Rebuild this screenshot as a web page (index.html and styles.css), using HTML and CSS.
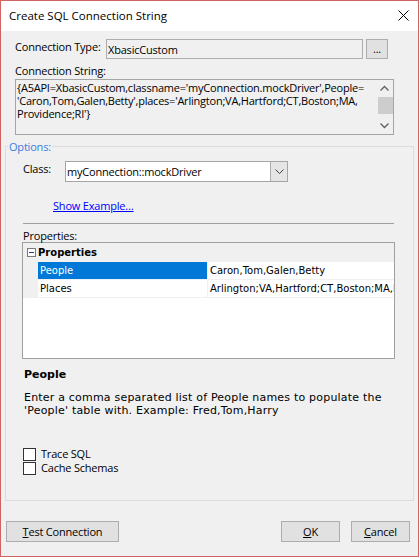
FILE: index.html
```html
<!DOCTYPE html>
<html>
<head>
<meta charset="utf-8">
<title>Create SQL Connection String</title>
<link rel="stylesheet" href="styles.css">
</head>
<body>
<div class="window">
  <div class="titlebar">
    <span class="title">Create SQL Connection String</span>
    <svg class="close" width="11" height="11" viewBox="0 0 11 11"><path d="M0.5 0.5 L10.5 10.5 M10.5 0.5 L0.5 10.5" stroke="#000" stroke-width="1" fill="none"/></svg>
  </div>
  <div class="content">
    <div class="top">
      <div class="type-row">
        <span class="type-label">Connection Type:</span>
        <div class="type-input">XbasicCustom</div>
        <div class="dots-btn">...</div>
      </div>
      <div class="cs-label">Connection String:</div>
      <div class="textarea">
        <div class="ta-text">{A5API=XbasicCustom,classname='myConnection.mockDriver',People=<br>'Caron,Tom,Galen,Betty',places='Arlington;VA,Hartford;CT,Boston;MA,<br>Providence;RI'}</div>
        <div class="vscroll">
          <svg class="arrow" width="15" height="17" viewBox="0 0 15 17"><path d="M3.5 10.5 L7.5 6.5 L11.5 10.5" stroke="#606060" stroke-width="1.3" fill="none"/></svg>
          <div class="thumb"></div>
          <div class="track"></div>
          <svg class="arrow" width="15" height="17" viewBox="0 0 15 17"><path d="M3.5 6.5 L7.5 10.5 L11.5 6.5" stroke="#606060" stroke-width="1.3" fill="none"/></svg>
        </div>
      </div>
    </div>

    <fieldset class="options">
      <legend class="legend">Options:</legend>
      <div class="options-body">
        <div class="class-row">
          <span class="class-label">Class:</span>
          <div class="combo">
            <span class="combo-text">myConnection::mockDriver</span>
            <div class="combo-btn"><svg width="9" height="6" viewBox="0 0 9 6"><path d="M0.5 0.5 L4.5 4.5 L8.5 0.5" stroke="#404040" stroke-width="1" fill="none"/></svg></div>
          </div>
        </div>
        <a class="example-link" href="#">Show Example…</a>
        <div class="separator"></div>
        <div class="props-label">Properties:</div>
        <div class="grid">
          <div class="cat-row">
            <span class="minus"><svg width="9" height="9" viewBox="0 0 9 9"><rect x="0.5" y="0.5" width="8" height="8" fill="#fff" stroke="#7a7a7a"/><path d="M2 4.5 H7" stroke="#1f3a8a" stroke-width="1"/></svg></span>
            <span class="cat-name">Properties</span>
          </div>
          <div class="prop-row">
            <span class="margin"></span>
            <span class="pname selected">People</span>
            <span class="pvalue">Caron,Tom,Galen,Betty</span>
          </div>
          <div class="prop-row">
            <span class="margin"></span>
            <span class="pname">Places</span>
            <span class="pvalue">Arlington;VA,Hartford;CT,Boston;MA,Providence;RI</span>
          </div>
        </div>
        <div class="desc-title">People</div>
        <div class="desc-text">Enter a comma separated list of People names to populate the<br>'People' table with. Example: Fred,Tom,Harry</div>
        <div class="checks">
          <label class="check"><span class="box"></span><span>Trace SQL</span></label>
          <label class="check"><span class="box"></span><span>Cache Schemas</span></label>
        </div>
      </div>
    </fieldset>

    <div class="buttons">
      <div class="btn btn-test"><u>T</u>est Connection</div>
      <div class="spacer"></div>
      <div class="btn btn-ok"><u>O</u>K</div>
      <div class="btn btn-cancel"><u>C</u>ancel</div>
    </div>
  </div>
</div>
</body>
</html>
```

FILE: styles.css
```css
* { box-sizing: border-box; }
html, body { margin: 0; padding: 0; }
body {
  font-family: "Open Sans", "Liberation Sans", sans-serif;
  font-size: 11px;
  letter-spacing: -0.2px;
  color: #000;
  background: #f0f0f0;
}
.window {
  width: 419px;
  height: 557px;
  border: 1px solid #d16262;
  background: #f0f0f0;
  display: flex;
  flex-direction: column;
}
.titlebar {
  height: 30px;
  background: #fff;
  display: flex;
  align-items: center;
  padding-left: 8px;
  padding-right: 9px;
}
.title { flex: 1; font-size: 11.5px; letter-spacing: 0; line-height: 30px; }
.close { display: block; margin-top: -1px; }

.content { padding: 0 4px; flex: 1; display: flex; flex-direction: column; }

.top { padding: 8px 20px 0 10px; }
.type-row { display: flex; align-items: flex-start; }
.type-label { width: 91px; line-height: 15px; white-space: nowrap; }
.type-input {
  width: 257px; height: 20px;
  border: 1px solid #adadad;
  background: #f0f0f0;
  line-height: 18px;
  padding-left: 1px;
  padding-top: 1px;
}
.dots-btn {
  width: 22px; height: 20px;
  margin-left: 3px;
  border: 1px solid #adadad;
  background: #e1e1e1;
  text-align: center;
  line-height: 18px;
  font-size: 11px;
}
.cs-label { margin-top: 4px; line-height: 15px; margin-bottom: 1px; }
.textarea {
  height: 56px;
  border: 1px solid #a5a5a5;
  background: #f0f0f0;
  display: flex;
}
.ta-text { flex: 1; padding: 1px 0 0 1px; line-height: 13px; white-space: nowrap; overflow: hidden; letter-spacing: -0.22px; }
.vscroll { width: 16px; display: flex; flex-direction: column; background: #f0f0f0; }
.arrow { display: block; flex: none; }
.thumb { height: 17px; background: #cdcdcd; margin: 0 0 0 1px; flex: none; }
.track { flex: 1; }

.options {
  margin: 4px 0 0 0;
  padding: 0;
  border: 1px solid #dcdcdc;
  min-width: 0;
}
.legend {
  color: #3b7de0;
  padding: 0 1px;
  margin-left: 2px;
  line-height: 15px;
}
.options-body { padding: 0 18px 25px 17px; }
.class-row { display: flex; align-items: flex-start; margin-top: 7px; }
.class-label { width: 42px; line-height: 15px; }
.combo {
  width: 223px; height: 21px;
  border: 1px solid #a5a5a5;
  background: #fff;
  display: flex;
}
.combo-text { flex: 1; line-height: 19px; padding-left: 1px; }
.combo-btn {
  width: 17px;
  background: #e5e5e5;
  border-left: 1px solid #adadad;
  display: flex; align-items: center; justify-content: center;
}
.combo-btn svg { display: block; }
.example-link {
  display: block;
  width: max-content;
  margin: 16px 0 0 30px;
  color: #0000ff;
  text-decoration: underline;
  line-height: 15px;
}
.separator { margin-top: 10px; height: 1px; width: 371px; background: #a0a0a0; }
.props-label { margin-top: 5px; line-height: 13px; }
.grid {
  margin-left: -1px;
  width: 373px;
  height: 117px;
  border: 1px solid #a0a0a0;
  background: #fff;
  font-family: "DejaVu Sans", Verdana, sans-serif;
  font-size: 10px;
  letter-spacing: 0;
}
.cat-row { height: 19px; background: #f0f0f0; display: flex; align-items: center; }
.minus { width: 15px; display: flex; justify-content: center; padding-left: 1px; }
.minus svg { display: block; }
.cat-name { font-weight: bold; font-size: 10px; }
.prop-row { height: 18px; display: flex; border-bottom: 1px solid #f0f0f0; }
.margin { width: 15px; background: #f0f0f0; flex: none; }
.pname { width: 170px; flex: none; line-height: 17px; padding-left: 2px; border-right: 1px solid #f0f0f0; }
.pname.selected { background: #0078d7; color: #fff; }
.pvalue { flex: 1; line-height: 17px; padding-left: 2px; white-space: nowrap; overflow: hidden; }
.desc-title {
  margin-top: 8px; padding-left: 1px;
  font-family: "DejaVu Sans", Verdana, sans-serif;
  font-weight: bold; font-size: 11px; line-height: 15px;
  letter-spacing: 0;
}
.desc-text {
  margin-top: 9px; padding-left: 1px;
  font-family: "DejaVu Sans", Verdana, sans-serif;
  font-size: 11px; letter-spacing: 0.2px; line-height: 13px;
  white-space: nowrap;
}
.checks { margin-top: 30px; }
.check { display: flex; align-items: flex-start; height: 14px; }
.box { width: 13px; height: 13px; margin-top: 1px; border: 1px solid #333; background: #fff; margin-right: 5px; flex: none; }
.check span:last-child { line-height: 14px; }

.buttons { display: flex; margin-top: 20px; padding-left: 1px; padding-right: 4px; }
.btn {
  height: 21px;
  border: 1px solid #adadad;
  background: #e1e1e1;
  text-align: center;
  line-height: 19px;
}
.btn u { text-decoration: underline; }
.btn-test { width: 113px; }
.spacer { flex: 1; }
.btn-ok { width: 59px; }
.btn-cancel { width: 59px; margin-left: 11px; }
```
